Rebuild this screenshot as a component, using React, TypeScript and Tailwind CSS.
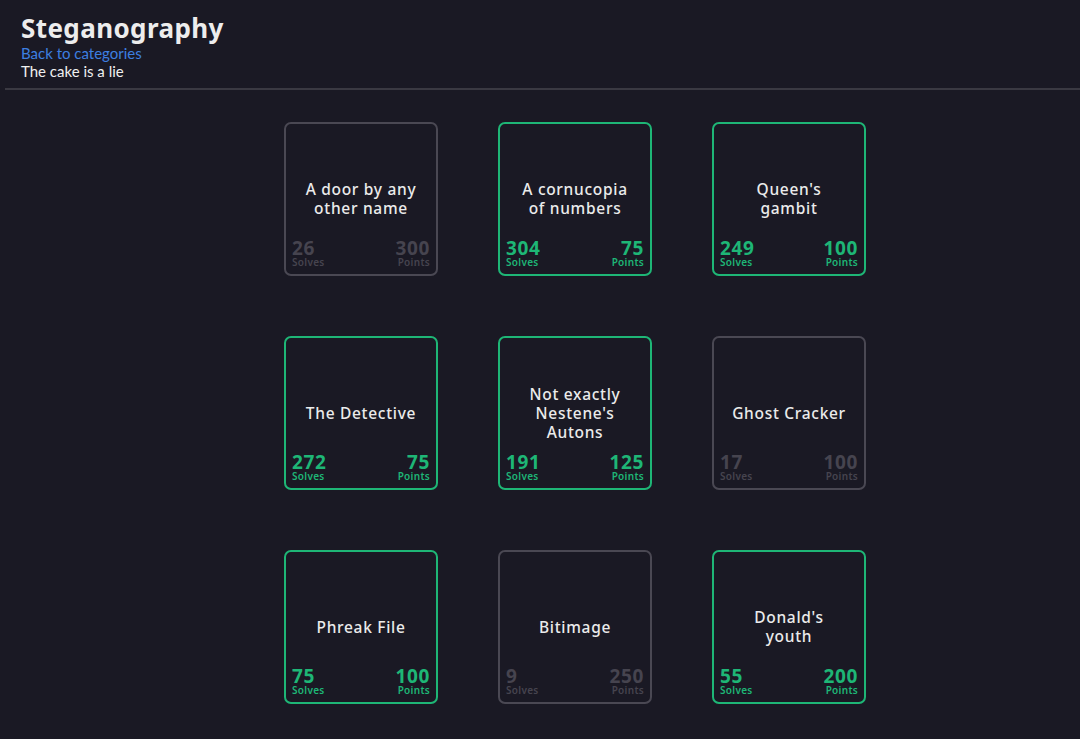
import React from "react";

type Ch = { title: string[]; solves: number; points: number; solved: boolean };

const items: Ch[] = [
  { title: ["A door by any", "other name"], solves: 26, points: 300, solved: false },
  { title: ["A cornucopia", "of numbers"], solves: 304, points: 75, solved: true },
  { title: ["Queen's", "gambit"], solves: 249, points: 100, solved: true },
  { title: ["The Detective"], solves: 272, points: 75, solved: true },
  { title: ["Not exactly", "Nestene's", "Autons"], solves: 191, points: 125, solved: true },
  { title: ["Ghost Cracker"], solves: 17, points: 100, solved: false },
  { title: ["Phreak File"], solves: 75, points: 100, solved: true },
  { title: ["Bitimage"], solves: 9, points: 250, solved: false },
  { title: ["Donald's", "youth"], solves: 55, points: 200, solved: true },
];

const mont = { fontFamily: '"Noto Sans", "Open Sans", sans-serif' };

function Card({ c }: { c: Ch }) {
  const border = c.solved ? "border-[#1eb676]" : "border-[#4a4853]";
  const txt = c.solved ? "text-[#1eb676]" : "text-[#46444f]";
  return (
    <div className={`w-[154px] h-[154px] rounded-[7px] border-2 ${border} flex flex-col px-[6px] pb-[6px]`}>
      <div className="h-[34px] shrink-0" />
      <div className="flex-1 flex flex-col items-center justify-center text-center text-[#ebebeb] text-[15.5px] leading-[19px] font-medium tracking-[0.7px]">
        {c.title.map((t, i) => (
          <div key={i}>{t}</div>
        ))}
      </div>
      <div className={`h-[28px] shrink-0 flex justify-between items-end ${txt}`}>
        <div className="flex flex-col items-start">
          <span className="text-[19px] leading-[17px] font-bold tracking-[0.6px]">{c.solves}</span>
          <span className="text-[10px] leading-[11px] font-semibold tracking-[0.3px]">Solves</span>
        </div>
        <div className="flex flex-col items-end">
          <span className="text-[19px] leading-[17px] font-bold tracking-[0.6px]">{c.points}</span>
          <span className="text-[10px] leading-[11px] font-semibold tracking-[0.3px]">Points</span>
        </div>
      </div>
    </div>
  );
}

export default function App() {
  return (
    <div className="min-h-[739px] w-[1080px] bg-[#1a1924] overflow-hidden">
      <div className="px-[21px] pt-[12px] pb-[8px]">
        <h1 className="text-[26px] leading-[32px] font-bold text-[#ededed] tracking-[0.4px]" style={mont}>
          Steganography
        </h1>
        <div
          className="text-[15px] leading-[18px] text-[#3d7fe0]"
          style={{ fontFamily: 'Lato, "Liberation Sans", sans-serif' }}
        >
          Back to categories
        </div>
        <div
          className="text-[15px] leading-[18px] text-[#f0f0f0]"
          style={{ fontFamily: 'Lato, "Liberation Sans", sans-serif' }}
        >
          The cake is a lie
        </div>
      </div>
      <div className="ml-[5px] h-[2px] bg-[#3a3942]" />
      <div className="pl-[284px] pt-[32px]" style={mont}>
        <div className="grid grid-cols-[154px_154px_154px] gap-x-[60px] gap-y-[60px]">
          {items.map((c, i) => (
            <Card key={i} c={c} />
          ))}
        </div>
      </div>
    </div>
  );
}
